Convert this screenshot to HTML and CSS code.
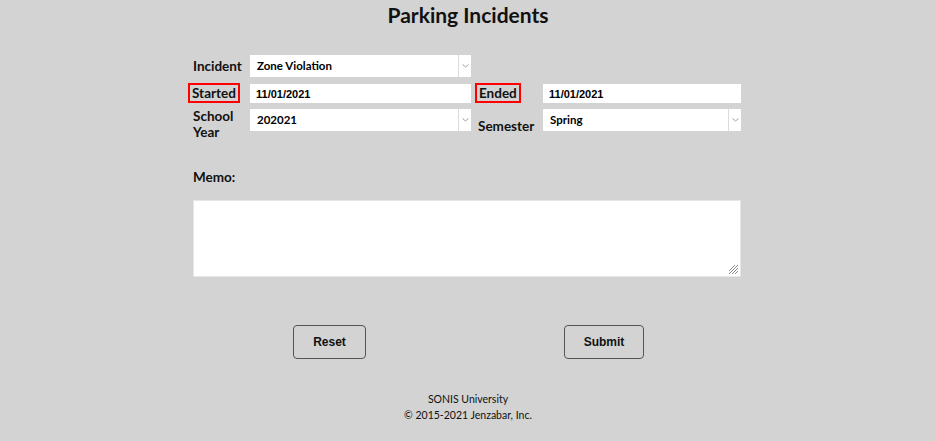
FILE: index.html
```html
<!DOCTYPE html>
<html>
<head>
<meta charset="utf-8">
<link rel="stylesheet" href="styles.css">
</head>
<body>
<h1 class="title">Parking Incidents</h1>
<form class="form">
  <div class="grid">
    <div class="lbl">Incident</div>
    <div class="sel sel-wide"><span class="sel-text">Zone Violation</span><span class="sel-arrow"><svg width="7" height="4" viewBox="0 0 7 4"><path d="M0.5 0.5 L3.5 3 L6.5 0.5" fill="none" stroke="#a0a0a0" stroke-width="1"/></svg></span></div>
    <div></div>
    <div></div>

    <div class="lbl"><span class="flag">Started</span></div>
    <div class="inp">11/01/2021</div>
    <div class="lbl lbl2"><span class="flag flag2">Ended</span></div>
    <div class="inp">11/01/2021</div>

    <div class="lbl lbl-two">School<br>Year</div>
    <div class="sel sel-top"><span class="sel-text">202021</span><span class="sel-arrow"><svg width="7" height="4" viewBox="0 0 7 4"><path d="M0.5 0.5 L3.5 3 L6.5 0.5" fill="none" stroke="#a0a0a0" stroke-width="1"/></svg></span></div>
    <div class="lbl lbl2 lbl-mid">Semester</div>
    <div class="sel sel-top"><span class="sel-text">Spring</span><span class="sel-arrow"><svg width="7" height="4" viewBox="0 0 7 4"><path d="M0.5 0.5 L3.5 3 L6.5 0.5" fill="none" stroke="#a0a0a0" stroke-width="1"/></svg></span></div>
  </div>
  <div class="memo-lbl">Memo:</div>
  <div class="memo-wrap">
    <textarea class="memo"></textarea>
    <svg class="grip" width="12" height="12" viewBox="0 0 12 12"><path d="M11 2 L2 11 M11 5 L5 11 M11 8 L8 11 M8 2 L2 8" stroke="#888" stroke-width="1" fill="none"/></svg>
  </div>
  <div class="buttons">
    <button type="button" class="btn btn-reset">Reset</button>
    <button type="button" class="btn btn-submit">Submit</button>
  </div>
</form>
<footer class="footer">
  <div>SONIS University</div>
  <div>© 2015-2021 Jenzabar, Inc.</div>
</footer>
</body>
</html>
```
FILE: styles.css
```css
html, body {
  margin: 0;
  padding: 0;
  background: #d3d3d3;
  font-family: "Lato", "DejaVu Sans", sans-serif;
  color: #000;
}
.title {
  margin: 0;
  padding-top: 3px;
  text-align: center;
  font-size: 21px;
  font-weight: 700;
  line-height: 23px;
  color: #111;
}
.form {
  width: 550px;
  margin: 29px auto 0;
}
.grid {
  width: 548px;
  display: grid;
  grid-template-columns: 57px 221px 72px 198px;
  grid-template-rows: 22px 20px 31px;
  row-gap: 6px;
  align-items: center;
}
.lbl {
  font-size: 13.5px;
  font-weight: 700;
  line-height: 16px;
  color: #111;
}
.lbl2 {
  padding-left: 7px;
}
.lbl-two {
  align-self: start;
  margin-top: -1px;
}
.lbl-mid {
  padding-top: 2px;
}
.flag {
  outline: 2px solid #f00;
  outline-offset: 0;
  padding: 0 2px;
  margin-left: -3px;
}
.flag2 {
  margin-left: -1px;
}
.sel {
  height: 22px;
  background: #fff;
  display: flex;
  align-items: stretch;
  box-sizing: border-box;
}
.sel-top {
  align-self: start;
}
.sel-text {
  flex: 1;
  font-size: 11.5px;
  font-weight: 700;
  padding-left: 7px;
  line-height: 22px;
}
.sel-arrow {
  width: 12px;
  border-left: 1px solid #dcdcdc;
  display: flex;
  align-items: center;
  justify-content: center;
}
.inp {
  height: 19px;
  background: #fff;
  font-size: 11px;
  font-weight: 700;
  line-height: 20px;
  padding-left: 6px;
  font-family: "Liberation Sans", Arial, sans-serif;
}
.memo-lbl {
  margin-top: 29px;
  font-size: 13.5px;
  font-weight: 700;
  line-height: 16px;
  color: #111;
}
.memo-wrap {
  position: relative;
  width: 548px;
  margin-top: 15px;
}
.memo {
  display: block;
  box-sizing: border-box;
  width: 548px;
  height: 77px;
  border: 1px solid #e6e6e6;
  background: #fff;
  padding: 0;
  resize: none;
}
.grip {
  position: absolute;
  right: 2px;
  bottom: 2px;
}
.buttons {
  display: flex;
  margin-top: 48px;
  padding-left: 100px;
  gap: 198px;
}
.btn {
  height: 34px;
  border: 1px solid #555;
  border-radius: 4px;
  background: #d3d3d3;
  font-family: "Liberation Sans", Arial, sans-serif;
  font-size: 12px;
  font-weight: 700;
  color: #111;
  padding: 0;
}
.btn-reset { width: 73px; }
.btn-submit { width: 80px; }
.footer {
  margin-top: 32px;
  text-align: center;
  font-size: 10.5px;
  line-height: 16px;
  color: #111;
}
```
